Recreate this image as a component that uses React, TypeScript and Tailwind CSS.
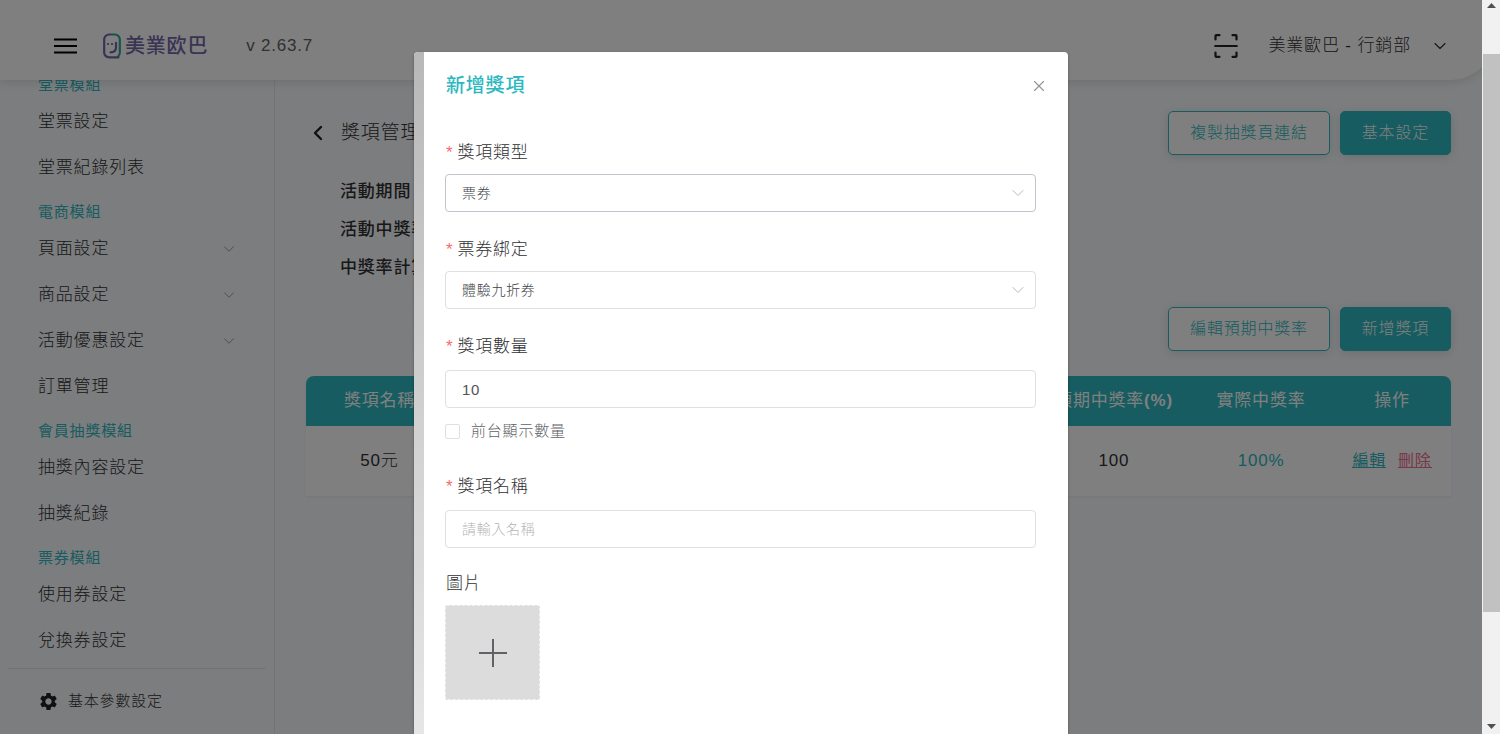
import type { ReactNode } from "react";
import { ChevronDown, ChevronLeft, X } from "lucide-react";
import { MdSettings } from "react-icons/md";

const menu = [
  { title: "堂票模組", items: [{ label: "堂票設定" }, { label: "堂票紀錄列表" }] },
  {
    title: "電商模組",
    items: [
      { label: "頁面設定", children: true },
      { label: "商品設定", children: true },
      { label: "活動優惠設定", children: true },
      { label: "訂單管理" },
    ],
  },
  { title: "會員抽獎模組", items: [{ label: "抽獎內容設定" }, { label: "抽獎紀錄" }] },
  { title: "票券模組", items: [{ label: "使用券設定" }, { label: "兌換券設定" }] },
];

function Logo() {
  return (
    <a href="#" className="flex items-center gap-1 text-[#7466a8]">
      <svg width="18" height="26" viewBox="0 0 18 26" fill="none" strokeWidth="2.2" strokeLinecap="round">
        <path d="M9.500 1.500H12A4.800 4.800 0 0 1 16.800 6.300V19.500A4.800 4.800 0 0 1 15 23.500" stroke="#2fa893" />
        <path d="M8 1.500H6A4.800 4.800 0 0 0 1.200 6.300V19.500A4.800 4.800 0 0 0 6 24.300H15.500" stroke="currentColor" />
        <path d="M13 9.800V14.500Q13 19.300 7.500 19.300" stroke="currentColor" />
        <path d="M5 11H5.100M9 11H9.100" stroke="currentColor" />
      </svg>
      <span className="text-xl leading-7 font-medium">美業欧巴</span>
    </a>
  );
}

function Header() {
  return (
    <header className="relative z-10 -mr-3 flex h-20 shrink-0 items-center rounded-br-[43px] bg-white pt-3 pr-11 pl-[54px] shadow-[0_2px_10px_rgba(0,0,0,0.12)]">
      <button aria-label="選單" className="mr-[26px]">
        <svg width="23" height="16" viewBox="0 0 23 16" stroke="#000" strokeWidth="2.200">
          <path d="M0 1.500H23M0 8H23M0 14.500H23" />
        </svg>
      </button>
      <Logo />
      <span className="ml-[38px] text-[17px] text-[#606266]">v 2.63.7</span>
      <div className="ml-auto flex items-center">
        <button aria-label="掃描" className="mr-[30px]">
          <svg
            width="24"
            height="24"
            viewBox="0 0 24 24"
            fill="none"
            stroke="#222"
            strokeWidth="2.200"
            strokeLinecap="round"
            strokeLinejoin="round"
          >
            <path d="M1.500 5.500V2Q1.500 1.200 2.300 1.200H5.500M18.500 1.200H21.700Q22.500 1.200 22.500 2V5.500M22.500 18.500V22Q22.500 22.800 21.700 22.800H18.500M5.500 22.800H2.300Q1.500 22.800 1.500 22V18.500M1.200 12H22.800" />
          </svg>
        </button>
        <button className="flex items-center gap-[19px] text-[17px] font-light tracking-wider text-[#303133]">
          美業歐巴 - 行銷部
          <ChevronDown size={20} strokeWidth={1.4} />
        </button>
      </div>
    </header>
  );
}

function Sidebar() {
  return (
    <aside className="w-[275px] shrink-0 overflow-hidden border-r border-[#e6e8ec]">
      <nav className="-mt-4 pr-9 pl-[38px]">
        {menu.map((group) => (
          <div key={group.title}>
            <h2 className="flex h-[35px] items-end pb-0.5 text-[15px] leading-6 text-[#2cb8c0]">{group.title}</h2>
            {group.items.map((item) => (
              <a
                key={item.label}
                href="#"
                className="flex h-[46px] items-center justify-between text-[17px] font-light text-[#303133]"
              >
                {item.label}
                {"children" in item && <ChevronDown size={18} strokeWidth={1.2} className="text-[#909399]" />}
              </a>
            ))}
          </div>
        ))}
      </nav>
      <div className="mx-2 mt-1 border-t border-[#e4e6eb] pt-5 pl-[30px]">
        <a href="#" className="flex items-center gap-[9px] text-[15px] leading-6 font-light text-[#303133]">
          <MdSettings size={21} className="text-[#222]" />
          基本參數設定
        </a>
      </div>
    </aside>
  );
}

function Button({ children, outline }: { children: ReactNode; outline?: boolean }) {
  const look = outline ? "bg-white text-[#2cb8c0]" : "bg-[#2cb8c0] text-white";
  return (
    <button
      className={`h-11 rounded-[5px] border border-[#2cb8c0] px-[21px] text-base font-light tracking-wider shadow-[0_2px_10px_rgba(0,0,0,0.12)] ${look}`}
    >
      {children}
    </button>
  );
}

function PrizeTable() {
  return (
    <table className="mt-[25px] w-full table-fixed text-center text-[17px] text-[#303133] shadow-[0_1px_2px_rgba(0,0,0,0.06)]">
      <thead>
        <tr className="h-[50px] bg-[#2cb8c0] text-white">
          <th className="w-[147px] rounded-tl-lg font-normal">獎項名稱</th>
          <th className="font-normal">獎項類型</th>
          <th className="font-normal">獎項數量</th>
          <th className="w-[150px] font-normal whitespace-nowrap">
            預期中獎率<b>(%)</b>
          </th>
          <th className="w-36 font-normal">實際中獎率</th>
          <th className="w-[118px] rounded-tr-lg font-normal">操作</th>
        </tr>
      </thead>
      <tbody>
        <tr className="h-[70px] bg-white font-light">
          <td>50元</td>
          <td>票券</td>
          <td>10</td>
          <td>100</td>
          <td className="text-[#2cb8c0]">100%</td>
          <td>
            <div className="flex justify-center gap-3 text-base font-normal underline">
              <a href="#" className="text-[#2cb8c0]">編輯</a>
              <a href="#" className="text-[#f0708f]">刪除</a>
            </div>
          </td>
        </tr>
      </tbody>
    </table>
  );
}

function PrizePage() {
  return (
    <main className="min-w-0 flex-1 px-[31px] pt-[31px]">
      <div className="flex items-center">
        <a href="#" aria-label="返回" className="mr-[11px]">
          <ChevronLeft size={24} strokeWidth={2.4} className="text-[#222]" />
        </a>
        <h1 className="text-[19px] font-light text-[#303133]">獎項管理</h1>
        <div className="ml-auto flex gap-2.5">
          <Button outline>複製抽獎頁連結</Button>
          <Button>基本設定</Button>
        </div>
      </div>
      <div className="mt-[18px] pl-[34px] text-[17px] leading-[38px] font-medium text-[#303133]">
        <p>活動期間：</p>
        <p>活動中獎率：</p>
        <p>中獎率計算：</p>
      </div>
      <div className="mt-5 flex justify-end gap-2.5">
        <Button outline>編輯預期中獎率</Button>
        <Button>新增獎項</Button>
      </div>
      <PrizeTable />
    </main>
  );
}

function Label({ htmlFor, required, children }: { htmlFor: string; required?: boolean; children: ReactNode }) {
  return (
    <label htmlFor={htmlFor} className="flex gap-1 pl-px text-[17px] leading-6 font-light text-[#303133]">
      {required && <span className="text-[#f56c6c]">*</span>}
      {children}
    </label>
  );
}

function Select({ id, value, className }: { id: string; value: string; className: string }) {
  return (
    <div className="relative mt-[9px]">
      <select
        id={id}
        className={`h-[38px] w-full appearance-none rounded border bg-white px-4 text-sm font-light tracking-wider text-[#404246] ${className}`}
      >
        <option>{value}</option>
      </select>
      <ChevronDown
        size={20}
        strokeWidth={1.2}
        className="pointer-events-none absolute top-[9px] right-2 text-[#b4b8c0]"
      />
    </div>
  );
}

function PrizeDialog() {
  const input =
    "mt-[11px] h-[38px] w-full rounded border border-[#dcdfe6] px-4 font-light tracking-wider text-[#505256] placeholder:text-[#b4b4b4]";
  return (
    <div
      role="dialog"
      aria-labelledby="dialog-title"
      className="flex min-h-[760px] w-[654px] overflow-hidden rounded bg-white shadow-[0_1px_3px_rgba(0,0,0,0.3)]"
    >
      <div className="w-2.5 shrink-0 bg-linear-to-b from-[#b8b8b8] to-[#ebebeb]" />
      <form className="flex-1 pr-8 pl-[21px]">
        <div className="flex items-center justify-between pt-[21px]">
          <h2 id="dialog-title" className="pt-px pl-px text-[19px] leading-6 font-medium text-[#2cb8c0]">
            新增獎項
          </h2>
          <button type="button" aria-label="關閉" className="-mr-3">
            <X size={18} strokeWidth={1.5} className="text-[#909399]" />
          </button>
        </div>

        <div className="mt-[43px]">
          <Label htmlFor="type" required>獎項類型</Label>
          <Select id="type" value="票券" className="border-[#c0c4cc]" />
        </div>
        <div className="mt-[26px]">
          <Label htmlFor="coupon" required>票券綁定</Label>
          <Select id="coupon" value="體驗九折券" className="border-[#dcdfe6]" />
        </div>
        <div className="mt-[26px]">
          <Label htmlFor="count" required>獎項數量</Label>
          <input id="count" defaultValue="10" className={`text-[15px] ${input}`} />
          <label className="mt-[11px] flex items-center gap-[11px] text-[15px] leading-6 font-light text-[#606266]">
            <input type="checkbox" className="size-[15px] appearance-none rounded-xs border border-[#dcdfe6] bg-white" />
            前台顯示數量
          </label>
        </div>
        <div className="mt-8">
          <Label htmlFor="name" required>獎項名稱</Label>
          <input id="name" placeholder="請輸入名稱" className={`text-sm ${input}`} />
        </div>
        <div className="mt-6">
          <Label htmlFor="picture">圖片</Label>
          <button
            id="picture"
            type="button"
            aria-label="上傳圖片"
            className="mt-[9px] flex size-[95px] items-center justify-center rounded-xs border border-dashed border-[#f2f2f2] bg-[#dcdcdc]"
          >
            <svg width="28" height="28" viewBox="0 0 28 28" stroke="#606266" strokeWidth="2">
              <path d="M14 0V28M0 14H28" />
            </svg>
          </button>
        </div>
      </form>
    </div>
  );
}

function ScrollRail() {
  return (
    <div aria-hidden="true" className="flex w-[18px] shrink-0 flex-col items-center justify-between bg-[#f1f1f1] pl-px">
      <svg width="9" height="14" viewBox="0 0 9 14" fill="#505050">
        <path d="M0 8L4.500 3L9 8Z" />
      </svg>
      <div className="mt-10 mb-auto h-[76%] w-full bg-[#c1c1c1]" />
      <svg width="9" height="14" viewBox="0 0 9 14" fill="#505050">
        <path d="M0 4L4.500 9L9 4Z" />
      </svg>
    </div>
  );
}

export default function App() {
  return (
    <div className="flex h-screen overflow-hidden font-['Liberation_Sans','Noto_Sans_CJK_TC',sans-serif] tracking-wider">
      <div className="relative flex min-w-0 flex-1 flex-col overflow-hidden bg-[#f8fafd]">
        <Header />
        <div className="flex min-h-0 flex-1">
          <Sidebar />
          <PrizePage />
        </div>
        <div className="absolute inset-0 z-20 flex items-start justify-center overflow-hidden bg-black/50 pt-[52px]">
          <PrizeDialog />
        </div>
      </div>
      <ScrollRail />
    </div>
  );
}
